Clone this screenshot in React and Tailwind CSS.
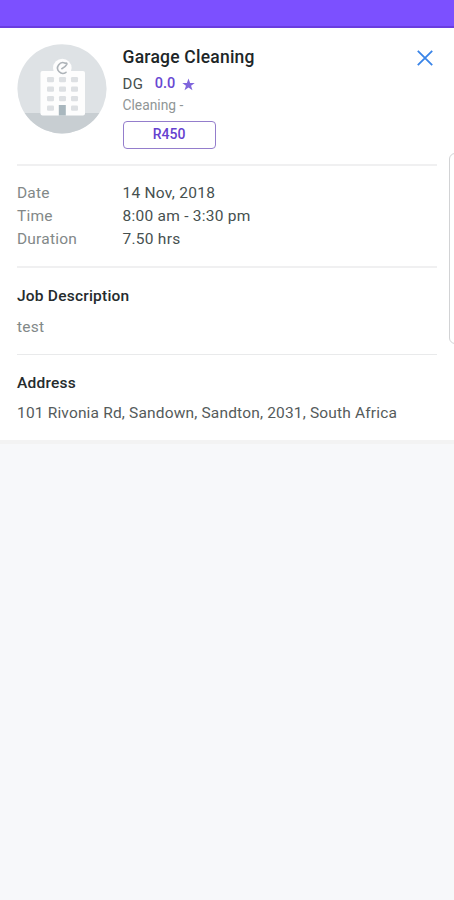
import React from "react";

const DETAILS = [
  ["Date", "14 Nov, 2018"],
  ["Time", "8:00 am - 3:30 pm"],
  ["Duration", "7.50 hrs"],
];

function BuildingAvatar() {
  const columns = [47, 59, 71];
  const rows = [77, 86.5, 96, 105.5];
  return (
    <svg className="h-[90px] w-[90px] shrink-0" viewBox="17 44 90 90" aria-hidden="true">
      <defs>
        <clipPath id="disc">
          <circle cx="62" cy="88.8" r="44.6" />
        </clipPath>
      </defs>
      <g clipPath="url(#disc)">
        <rect x="17" y="44" width="90" height="90" fill="#dee2e5" />
        <rect x="17" y="113" width="90" height="21" fill="#c8ced2" />
        <rect x="40.5" y="71" width="44.5" height="44.5" rx="2" fill="#fdfdfd" />
        <circle cx="62.3" cy="68" r="9.3" fill="#fdfdfd" />
        {rows.map((y, r) =>
          columns.map((x, c) =>
            r === 3 && c === 1 ? null : (
              <rect key={`${x}-${y}`} x={x} y={y} width="7" height="5.2" rx="1.2" fill="#dde0e3" />
            )
          )
        )}
        <rect x="58.8" y="105" width="7" height="10.5" fill="#a9b7be" />
        <path
          d="M66 72.300A5.300 5.300 0 1 1 65.200 63.200Q67.300 62.600 66.800 64.300Q65.600 66.700 61.800 68.700"
          fill="none"
          stroke="#adb3b8"
          strokeWidth="1.6"
          strokeLinecap="round"
        />
      </g>
    </svg>
  );
}

export default function App() {
  return (
    <div className="relative h-[900px] w-full overflow-hidden bg-[#f7f8fa] font-['Roboto',sans-serif] text-[15.5px] text-[#46504f]">
      <header className="h-7 border-b-2 border-[#6a3de0] bg-[#7c50ff]" />
      <main className="h-[412px] bg-white pr-[17px] pl-[17px]">
        <section className="flex h-[138px] border-b-2 border-[#f0f0f1] pt-4">
          <BuildingAvatar />
          <div className="ml-[15.5px] flex flex-1 flex-col items-start whitespace-nowrap">
            <h1 className="mt-px h-6 text-[17.5px] leading-6 font-medium tracking-[0.22px] text-[#1d2628]">Garage Cleaning</h1>
            <div className="mt-[5px] flex h-5 items-center text-[15px] leading-5">
              <span className="tracking-[0.3px]">DG</span>
              <span className="ml-[11.5px] text-[14.5px] font-medium text-[#6848d2]">0.0</span>
              <svg className="ml-[7px] h-[13px] w-[13px]" viewBox="0 0 24 24" fill="#7f65dc" aria-hidden="true">
                <path d="M12 1l3 8h8.5l-6.8 5.1 2.6 8.4L12 17.4l-7.300 5.1 2.600-8.400L.5 9H9z" />
              </svg>
            </div>
            <div className="mt-[2px] h-[18px] text-[13.8px] leading-[18px] text-[#909696]">Cleaning -</div>
            <button className="mt-[7px] flex h-7 w-[93px] items-center justify-center rounded-[4px] border border-[#947dcc] pb-px text-[14px] font-medium text-[#6541cf]">
              R450
            </button>
          </div>
          <button className="mt-[5.5px] mr-[4px] h-4 w-4" aria-label="Close">
            <svg className="h-4 w-4" viewBox="0 0 16 16" fill="none" stroke="#3984e8" strokeWidth="1.8">
              <path d="M.8.8l14.400 14.400M15.200.8L.8 15.200" />
            </svg>
          </button>
        </section>

        <section className="h-[102px] border-b-2 border-[#f0f0f1] pt-4">
          <dl>
            {DETAILS.map(([label, value]) => (
              <div key={label} className="flex h-[23px] items-center leading-[23px]">
                <dt className="w-[105.5px] tracking-[0.2px] text-[#828888]">{label}</dt>
                <dd className="tracking-[0.26px]">{value}</dd>
              </div>
            ))}
          </dl>
        </section>

        <section className="h-[87px] border-b border-[#e9eaeb] pt-[18px]">
          <h2 className="h-5 leading-5 font-medium tracking-[0.22px] text-[#252b2d]">Job Description</h2>
          <p className="mt-[11px] h-5 leading-5 tracking-[0.2px] text-[#828888]">test</p>
        </section>

        <section className="pt-[18px]">
          <h2 className="h-5 leading-5 font-medium tracking-[0.22px] text-[#252b2d]">Address</h2>
          <p className="mt-[10px] h-5 leading-5 tracking-[0.17px] whitespace-nowrap text-[#555b5b]">
            101 Rivonia Rd, Sandown, Sandton, 2031, South Africa
          </p>
        </section>
      </main>
      <div className="h-1 bg-[#f3f3f3]" />
      <div className="absolute top-[153px] left-[449px] h-[191px] w-4 rounded-[6px] border border-[#d2d3d5] bg-white" />
    </div>
  );
}
